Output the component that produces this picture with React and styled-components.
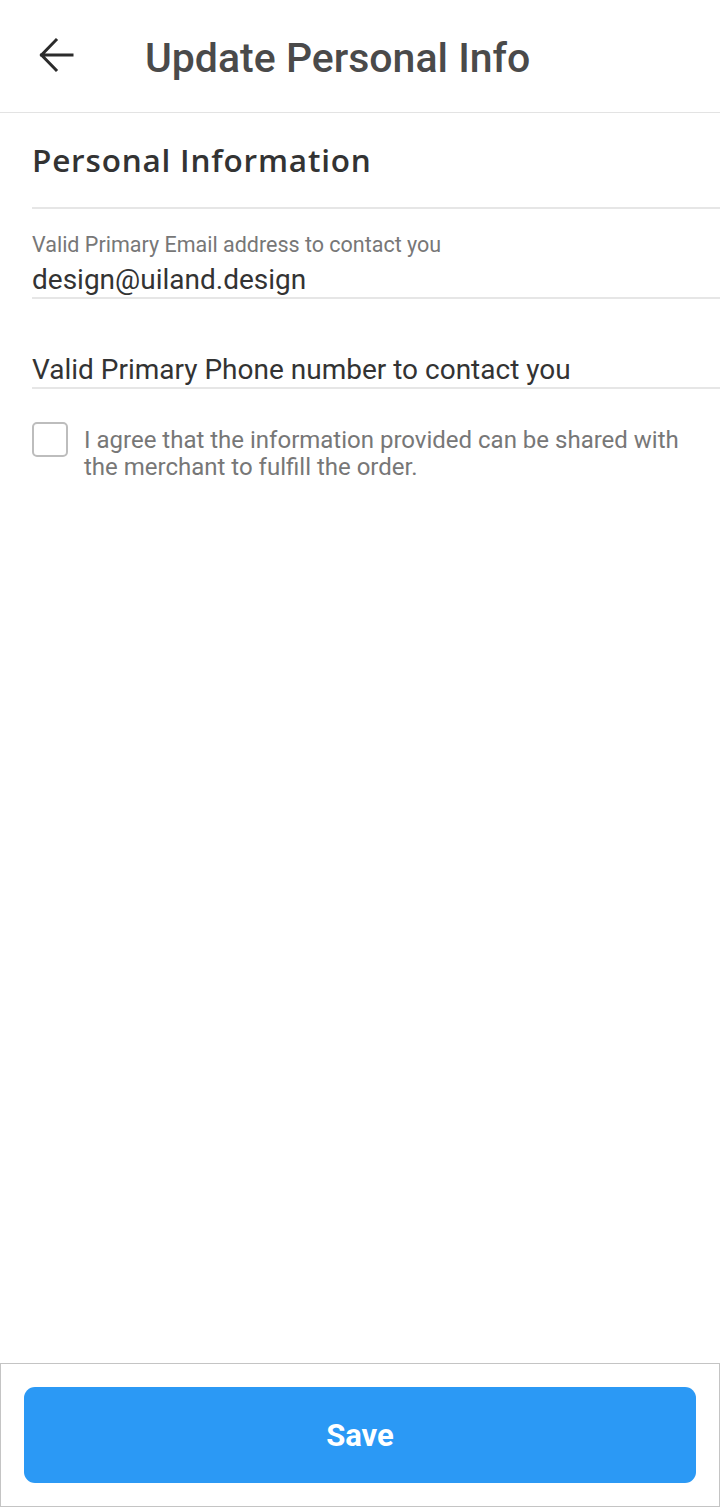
import React from 'react'
import styled, { createGlobalStyle } from 'styled-components'

const GlobalStyle = createGlobalStyle`
  html, body {
    margin: 0;
    padding: 0;
    background: #ffffff;
    font-family: Roboto, "Liberation Sans", sans-serif;
  }
  * { box-sizing: border-box; }
`

const Page = styled.div`
  display: flex;
  flex-direction: column;
  min-height: 100vh;
  background: #fff;
`

const Header = styled.header`
  display: flex;
  align-items: center;
  height: 113px;
  padding-left: 38px;
  border-bottom: 1px solid #e3e3e3;
`

const BackButton = styled.button`
  display: flex;
  align-items: center;
  justify-content: center;
  width: 36px;
  height: 36px;
  margin-bottom: 3px;
  padding: 0;
  border: none;
  background: none;
  color: #2b2b2b;
`

const Title = styled.h1`
  margin: 4px 0 0 71px;
  font-size: 41px;
  font-weight: 500;
  color: #4a4a4a;
`

const Content = styled.main`
  flex: 1;
  padding-left: 32px;
`

const SectionTitle = styled.h2`
  display: flex;
  align-items: center;
  height: 96px;
  margin: 0;
  padding-bottom: 2px;
  font-family: "Open Sans", Roboto, sans-serif;
  font-size: 31.5px;
  font-weight: 600;
  letter-spacing: 0.8px;
  color: #333;
  border-bottom: 2px solid #e6e6e6;
`

const Field = styled.div`
  display: flex;
  flex-direction: column;
  margin-top: ${p => p.top}px;
  border-bottom: 2px solid #e6e6e6;
`

const Label = styled.span`
  font-size: 21.5px;
  line-height: 24px;
  color: #777;
`

const Value = styled.span`
  padding-top: ${p => p.shift}px;
  font-size: 28px;
  line-height: 34px;
  color: #333;
`

const AgreeRow = styled.label`
  display: flex;
  align-items: flex-start;
  gap: 16px;
  margin-top: 33px;
  padding-right: 30px;
`

const Box = styled.span`
  flex: 0 0 auto;
  width: 36px;
  height: 35px;
  border: 2px solid #bdbdbd;
  border-radius: 5px;
`

const AgreeText = styled.span`
  margin-top: 5px;
  font-size: 24px;
  line-height: 27px;
  color: #777;
`

const Footer = styled.footer`
  padding: 23px;
  border: 1px solid #c4c4c4;
`

const SaveButton = styled.button`
  display: block;
  width: 100%;
  height: 96px;
  border: none;
  border-radius: 11px;
  background: #2b99f5;
  color: #fff;
  font-family: Roboto, "Liberation Sans", sans-serif;
  font-size: 31px;
  font-weight: 700;
`

const ArrowIcon = () => (
  <svg width="36" height="36" viewBox="0 0 36 36" fill="none">
    <path d="M34 18H3.5M18 3L3.5 18L18 33" stroke="currentColor" strokeWidth="3" strokeLinecap="square" />
  </svg>
)

export default function App() {
  return (
    <Page>
      <GlobalStyle />
      <Header>
        <BackButton aria-label="Back">
          <ArrowIcon />
        </BackButton>
        <Title>Update Personal Info</Title>
      </Header>
      <Content>
        <SectionTitle>Personal Information</SectionTitle>
        <Field top={24}>
          <Label>Valid Primary Email address to contact you</Label>
          <Value shift={6}>design@uiland.design</Value>
        </Field>
        <Field top={45}>
          <Value shift={9}>Valid Primary Phone number to contact you</Value>
        </Field>
        <AgreeRow>
          <Box />
          <AgreeText>
            I agree that the information provided can be shared with the merchant to fulfill the order.
          </AgreeText>
        </AgreeRow>
      </Content>
      <Footer>
        <SaveButton>Save</SaveButton>
      </Footer>
    </Page>
  )
}
